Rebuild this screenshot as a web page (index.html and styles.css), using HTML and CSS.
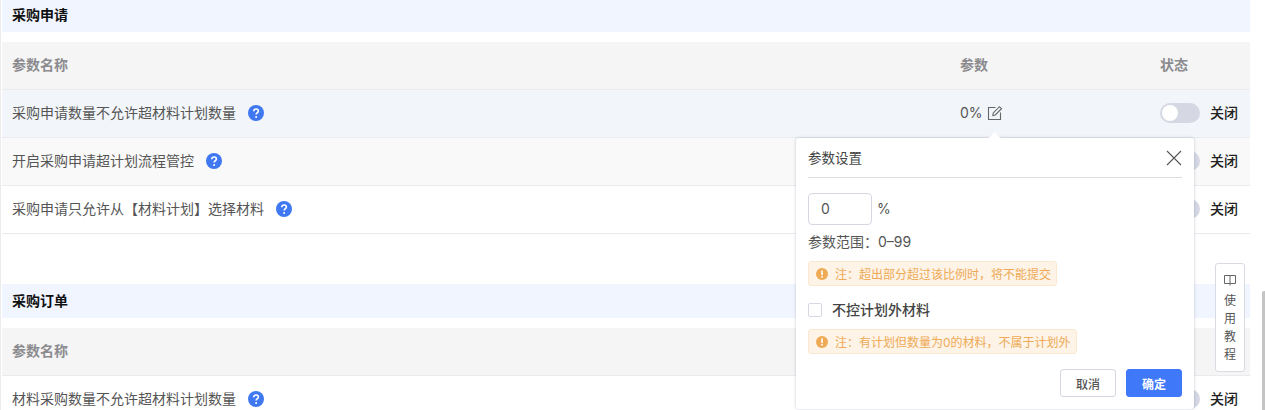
FILE: index.html
```html
<!DOCTYPE html>
<html lang="zh-CN">
<head>
<meta charset="utf-8">
<title>参数设置</title>
<link rel="stylesheet" href="styles.css">
</head>
<body>
<main class="page">
  <section class="section section-first">
    <h2 class="section-title">采购申请</h2>
    <div class="table">
      <div class="row head"><div class="c-name">参数名称</div><div class="c-param">参数</div><div class="c-state">状态</div></div>
      <div class="row hover">
        <div class="c-name">采购申请数量不允许超材料计划数量<svg class="help" viewBox="0 0 16 16"><circle cx="8" cy="8" r="8" fill="#3f78f0"/><path d="M5.7 6.2c.1-1.4 1-2.2 2.4-2.2 1.3 0 2.3.8 2.3 2 0 1.7-2.3 1.8-2.3 3.5" fill="none" stroke="#fff" stroke-width="1.6"/><circle cx="8.1" cy="11.9" r="1" fill="#fff"/></svg></div>
        <div class="c-param">0%<svg class="edit" viewBox="0 0 16 16" fill="none" stroke="#666" stroke-width="1.1"><path d="M8.5 2.5H1.5v12h12V7.5"/><path d="M5.8 10.5l.5-2.6L12.5 1.7l2 2-6.2 6.3z"/></svg></div>
        <div class="c-state"><span class="switch"><i></i></span><span class="state-text">关闭</span></div>
      </div>
      <div class="row alt">
        <div class="c-name">开启采购申请超计划流程管控<svg class="help" viewBox="0 0 16 16"><circle cx="8" cy="8" r="8" fill="#3f78f0"/><path d="M5.7 6.2c.1-1.4 1-2.2 2.4-2.2 1.3 0 2.3.8 2.3 2 0 1.7-2.3 1.8-2.3 3.5" fill="none" stroke="#fff" stroke-width="1.6"/><circle cx="8.1" cy="11.9" r="1" fill="#fff"/></svg></div>
        <div class="c-param"></div>
        <div class="c-state"><span class="switch"><i></i></span><span class="state-text">关闭</span></div>
      </div>
      <div class="row">
        <div class="c-name">采购申请只允许从【材料计划】选择材料<svg class="help" viewBox="0 0 16 16"><circle cx="8" cy="8" r="8" fill="#3f78f0"/><path d="M5.7 6.2c.1-1.4 1-2.2 2.4-2.2 1.3 0 2.3.8 2.3 2 0 1.7-2.3 1.8-2.3 3.5" fill="none" stroke="#fff" stroke-width="1.6"/><circle cx="8.1" cy="11.9" r="1" fill="#fff"/></svg></div>
        <div class="c-param"></div>
        <div class="c-state"><span class="switch"><i></i></span><span class="state-text">关闭</span></div>
      </div>
    </div>
  </section>
  <section class="section">
    <h2 class="section-title">采购订单</h2>
    <div class="table">
      <div class="row head"><div class="c-name">参数名称</div><div class="c-param">参数</div><div class="c-state">状态</div></div>
      <div class="row">
        <div class="c-name">材料采购数量不允许超材料计划数量<svg class="help" viewBox="0 0 16 16"><circle cx="8" cy="8" r="8" fill="#3f78f0"/><path d="M5.7 6.2c.1-1.4 1-2.2 2.4-2.2 1.3 0 2.3.8 2.3 2 0 1.7-2.3 1.8-2.3 3.5" fill="none" stroke="#fff" stroke-width="1.6"/><circle cx="8.1" cy="11.9" r="1" fill="#fff"/></svg></div>
        <div class="c-param"></div>
        <div class="c-state"><span class="switch"><i></i></span><span class="state-text">关闭</span></div>
      </div>
    </div>
  </section>
</main>

<div class="popover">
  <span class="arrow"></span>
  <div class="pop-head">
    <span>参数设置</span>
    <svg class="close" viewBox="0 0 16 16" fill="none" stroke="#555" stroke-width="1.1"><path d="M1 1l14 14M15 1L1 15"/></svg>
  </div>
  <div class="input-line"><span class="input">0</span><span class="unit">%</span></div>
  <div class="range">参数范围：0–99</div>
  <div class="note"><svg class="warn" viewBox="0 0 12 12"><circle cx="6" cy="6" r="6" fill="#eeaa55"/><rect x="5.2" y="2.5" width="1.6" height="4.6" fill="#fff"/><rect x="5.2" y="8" width="1.6" height="1.6" fill="#fff"/></svg>注：超出部分超过该比例时，将不能提交</div>
  <label class="check"><span class="box"></span>不控计划外材料</label>
  <div class="note"><svg class="warn" viewBox="0 0 12 12"><circle cx="6" cy="6" r="6" fill="#eeaa55"/><rect x="5.2" y="2.5" width="1.6" height="4.6" fill="#fff"/><rect x="5.2" y="8" width="1.6" height="1.6" fill="#fff"/></svg>注：有计划但数量为0的材料，不属于计划外</div>
  <div class="actions"><button class="btn">取消</button><button class="btn primary">确定</button></div>
</div>

<aside class="guide">
  <svg class="book" viewBox="0 0 12 12" fill="none" stroke="#666" stroke-width="1"><path d="M.5 1.5h11v8h-11zM6 1.5V11.5"/></svg>
  <span>使</span><span>用</span><span>教</span><span>程</span>
</aside>
<div class="scrollbar"></div>
</body>
</html>
```
FILE: styles.css
```css
* { box-sizing: border-box; }
html, body { margin: 0; height: 410px; overflow: hidden; background: #fff; }
body { font-family: Inter, "Noto Sans CJK SC", sans-serif; font-size: 14px; color: #555; position: relative; }
.page { width: 1250px; height: 410px; padding-left: 1px; border-left: 1px solid #ececec; overflow: hidden; }
.section { margin-bottom: 50px; }
.section-title { margin: 0 0 10px; height: 34px; line-height: 34px; padding-left: 10px; background: #f0f5ff; font-size: 14px; font-weight: 700; color: #111; }
.section-first .section-title { height: 32px; line-height: 29px; }
.row { display: flex; align-items: center; height: 48px; padding-bottom: 1px; border-bottom: 1px solid #e9ebef; line-height: 20px; }
.row.head { background: #f5f5f5; font-weight: 700; color: #8b8b8f; }
.row.hover { background: #f2f5f9; }
.row.alt { background: #f9f9f9; }
.c-name { width: 958px; padding-left: 10px; display: flex; align-items: center; flex: none; }
.c-param { width: 200px; flex: none; display: flex; align-items: center; }
.c-state { display: flex; align-items: center; flex: 1; }
.help { width: 16px; height: 16px; margin-left: 12px; flex: none; }
.edit { width: 16px; height: 16px; margin-left: 4px; }
.switch { width: 40px; height: 20px; background: #d5d8e3; border-radius: 10px; padding: 2px; display: block; flex: none; }
.switch i { display: block; width: 16px; height: 16px; border-radius: 50%; background: #fff; }
.state-text { margin-left: 10px; color: #222; font-weight: 500; }
.popover { position: absolute; left: 796px; top: 138px; width: 398px; height: 271px; background: #fff; border-radius: 3px; box-shadow: 0 0 3px rgba(60,70,100,.3); padding: 0 12px; }
.arrow { position: absolute; left: 194px; top: -4px; width: 9px; height: 9px; background: #fff; transform: rotate(45deg); }
.pop-head { height: 40px; display: flex; justify-content: space-between; align-items: center; border-bottom: 1px solid #dcdde2; color: #444; font-size: 13.5px; line-height: 40px; }
.close { width: 16px; height: 16px; }
.input-line { display: flex; align-items: center; margin-top: 15px; }
.input { width: 64px; height: 32px; border: 1px solid #d5d8e3; border-radius: 4px; padding-left: 12px; line-height: 30px; }
.unit { margin-left: 5px; line-height: 32px; height: 32px; }
.range { margin-top: 7px; line-height: 20px; }
.note { display: flex; width: max-content; align-items: center; height: 25px; margin-top: 9px; padding: 0 5px 0 7px; background: #fdf3e7; border: 1px solid #fbe8d0; border-radius: 3px; font-size: 12px; color: #eeaa55; }
.warn { width: 12px; height: 12px; margin-right: 7px; }
.check { display: flex; align-items: center; margin-top: 14px; height: 20px; line-height: 18px; color: #444; font-weight: 500; }
.box { width: 14px; height: 14px; border: 1px solid #d5d8e3; border-radius: 2px; margin-right: 10px; background: #fff; }
.actions { display: flex; justify-content: flex-end; gap: 10px; margin-top: 15px; }
.btn { width: 56px; height: 28px; border: 1px solid #d5d8e3; border-radius: 3px; background: #fff; font: 500 12px "Noto Sans CJK SC", sans-serif; color: #555; padding: 0; }
.btn.primary { background: #3f78f8; border-color: #3f78f8; color: #fff; font-weight: 700; }
.guide { position: absolute; left: 1215px; top: 263px; width: 30px; height: 109px; background: #fff; border: 1px solid #d9dbe2; border-radius: 3px; display: flex; flex-direction: column; align-items: center; padding-top: 10px; font-size: 12px; color: #555; line-height: 18px; }
.book { width: 12px; height: 12px; margin-bottom: 6px; }
.scrollbar { position: absolute; left: 1262px; top: 291px; width: 3px; height: 119px; background: #c4c4c4; border-radius: 2px 0 0 0; }
```
